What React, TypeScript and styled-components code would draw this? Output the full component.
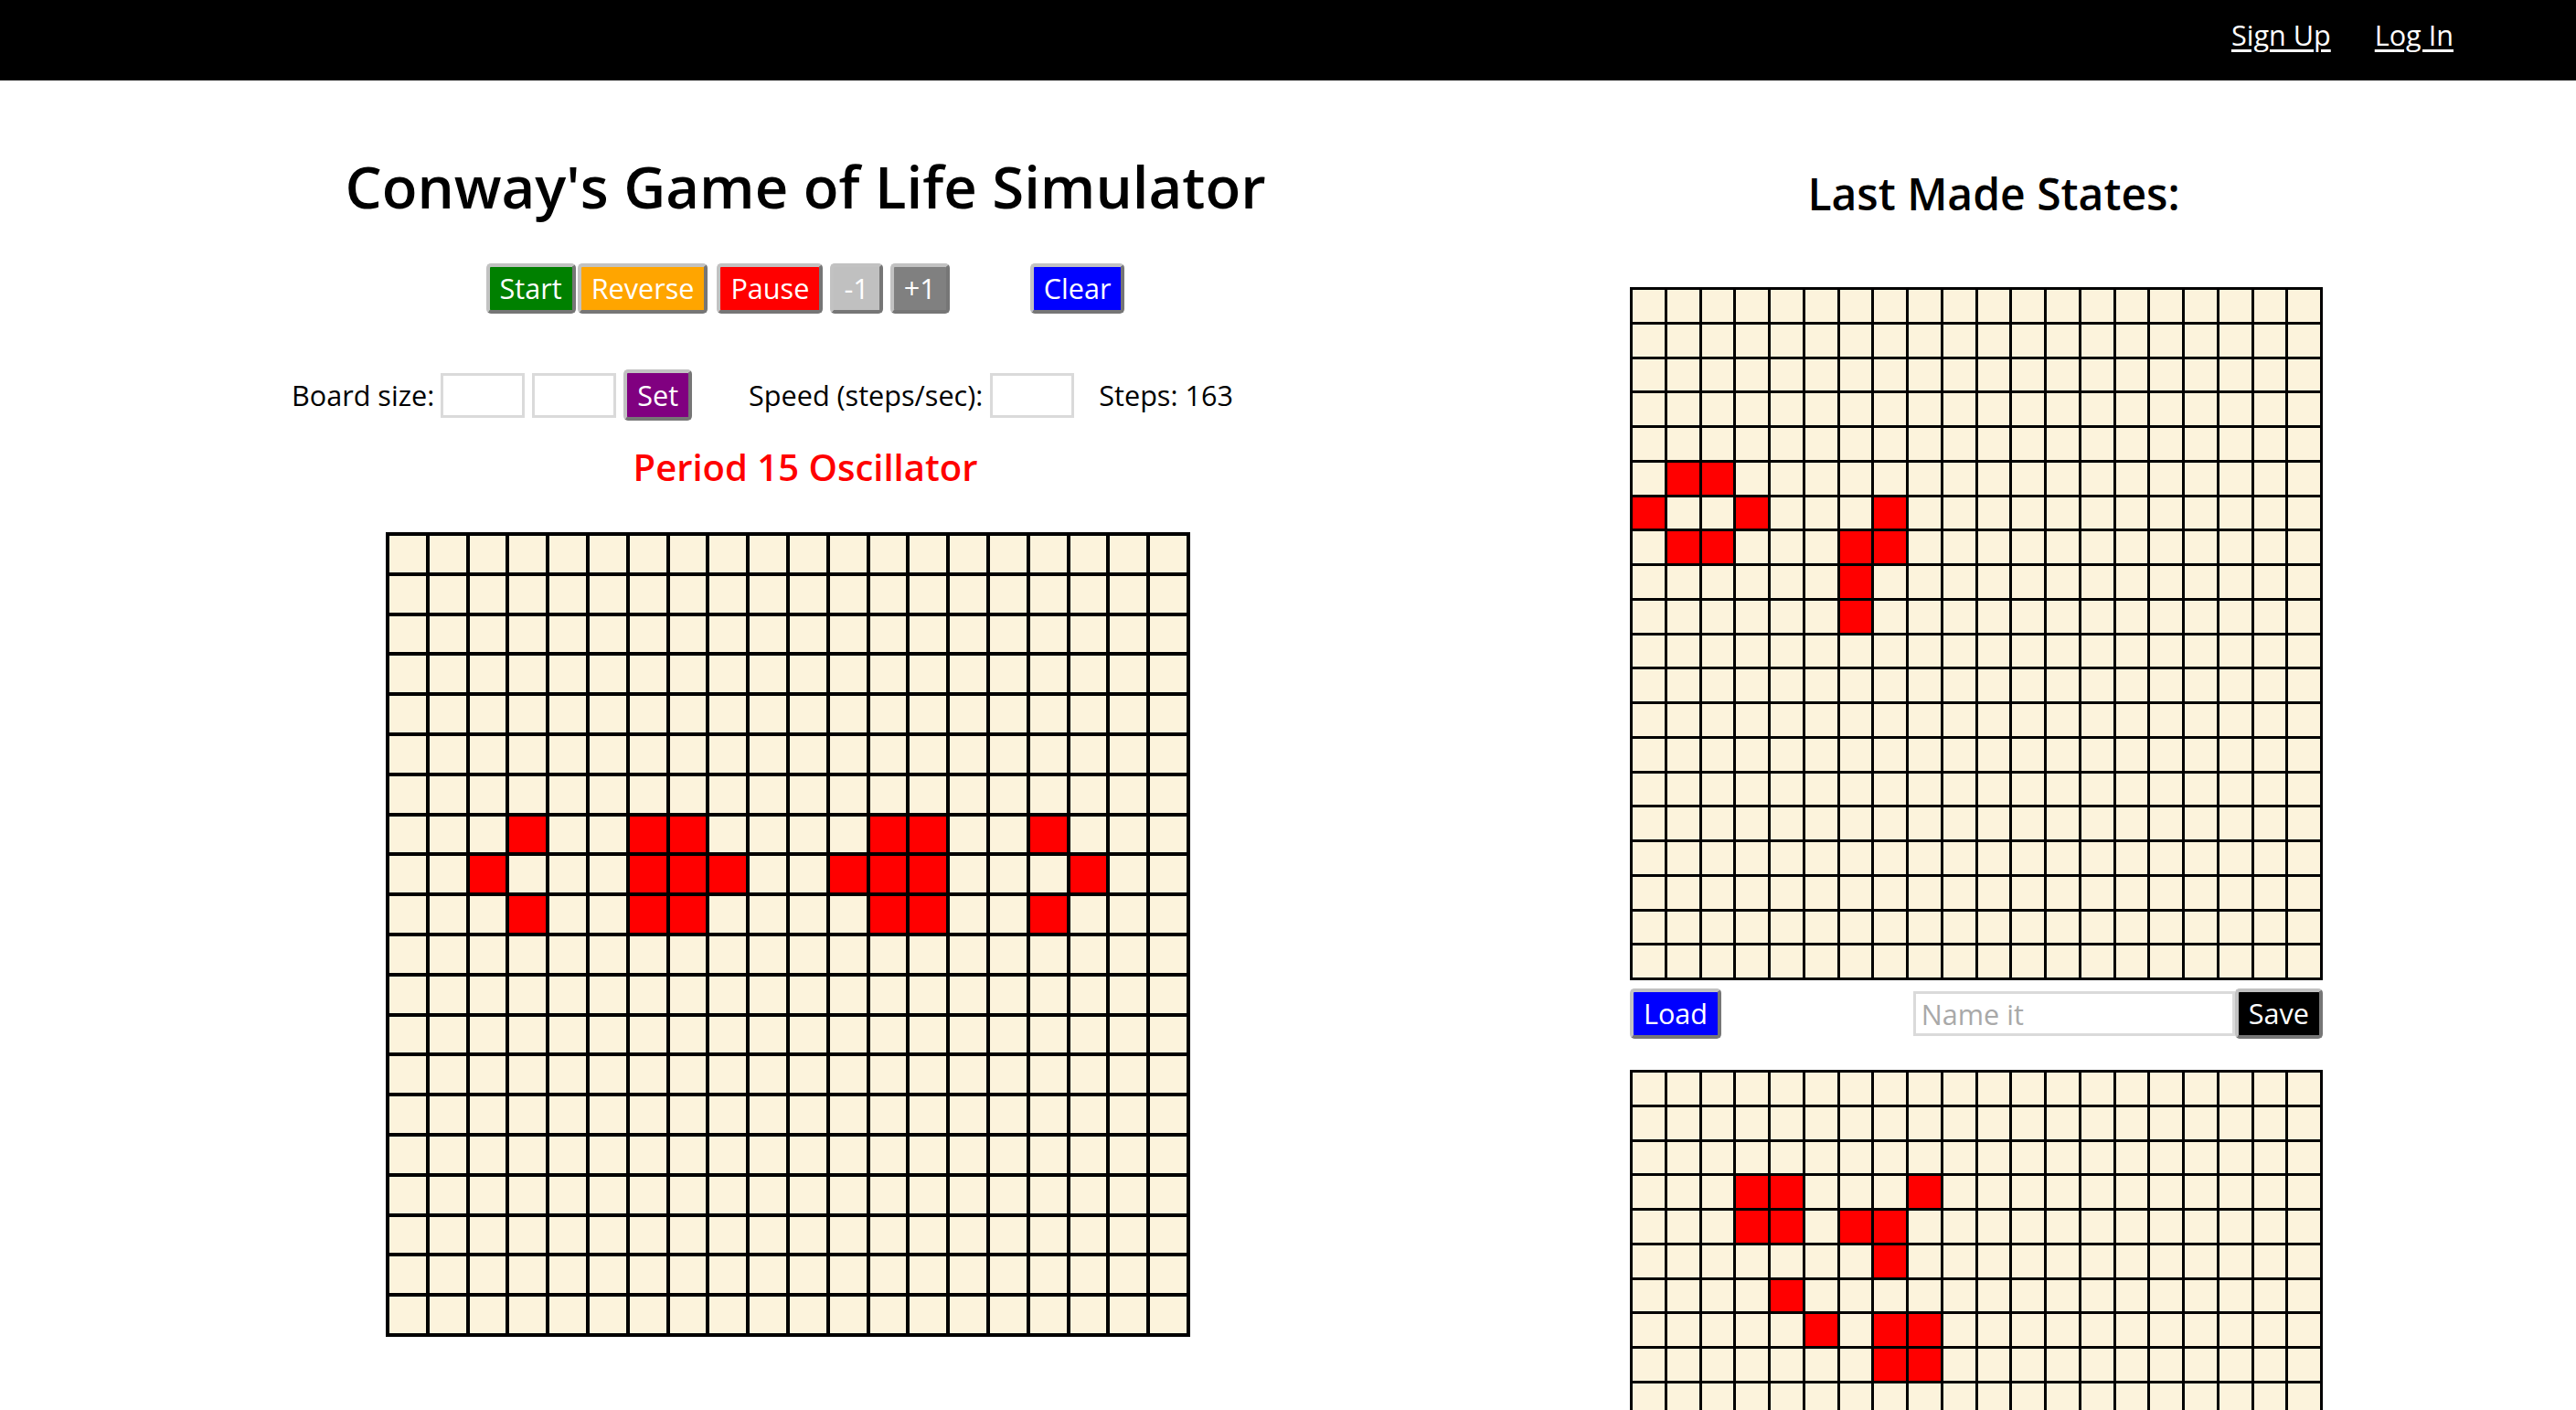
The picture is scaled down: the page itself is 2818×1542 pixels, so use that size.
import React from "react";
import styled, { createGlobalStyle } from "styled-components";

const GlobalStyle = createGlobalStyle`
  html, body { margin: 0; padding: 0; background: #ffffff; }
  body { font-family: "Open Sans", "Noto Sans", sans-serif; color: #000; }
  * { box-sizing: border-box; }
`;

const TopBar = styled.header`
  height: 88px;
  background: #000;
  display: flex;
  justify-content: flex-end;
  align-items: flex-start;
  gap: 48px;
  padding: 17px 134px 0 0;
`;

const NavLink = styled.a`
  color: #fff;
  font-size: 30.6px;
  line-height: 42px;
  text-decoration: underline;
  text-underline-offset: 4px;
  cursor: pointer;
`;

const Page = styled.main`
  display: flex;
  align-items: flex-start;
`;

const LeftColumn = styled.section`
  width: 1762px;
  display: flex;
  flex-direction: column;
  align-items: center;
`;

const RightColumn = styled.section`
  width: 838px;
  display: flex;
  flex-direction: column;
`;

const Title = styled.h1`
  margin: 73px 0 0;
  font-size: 63.5px;
  line-height: 86px;
  font-weight: 600;
  text-align: center;
`;

const ButtonRow = styled.div`
  margin-top: 41px;
  display: flex;
  align-items: center;
`;

const ActionButton = styled.button<{ $bg: string; $ml?: number; $h?: number }>`
  height: ${(p) => p.$h ?? 55}px;
  margin-left: ${(p) => p.$ml ?? 0}px;
  padding: 0 11px;
  font-family: "Open Sans", "Noto Sans", sans-serif;
  font-size: 30.6px;
  line-height: 1;
  color: #fff;
  background: ${(p) => p.$bg};
  border: 4px solid;
  border-color: #c2c2c2 #767676 #767676 #c2c2c2;
  border-radius: 5px;
  cursor: pointer;
`;

const SettingsRow = styled.div`
  align-self: stretch;
  margin-top: 61px;
  padding-left: 319px;
  display: flex;
  align-items: center;
  font-size: 30.6px;
`;

const Label = styled.span<{ $ml?: number }>`
  margin-left: ${(p) => p.$ml ?? 0}px;
  line-height: 42px;
  white-space: nowrap;
`;

const NumberInput = styled.input<{ $ml?: number }>`
  width: 92px;
  height: 49px;
  margin-left: ${(p) => p.$ml ?? 0}px;
  border: 3px solid #dadada;
  background: #fff;
  font-family: "Open Sans", "Noto Sans", sans-serif;
  font-size: 30.6px;
`;

const PatternName = styled.div`
  margin-top: 24px;
  font-size: 40px;
  line-height: 54px;
  font-weight: 600;
  color: #ff0000;
`;

const Board = styled.div<{ $size: number; $line: number; $n: number }>`
  width: ${(p) => p.$size}px;
  height: ${(p) => p.$size}px;
  background: #000;
  padding: ${(p) => p.$line}px;
  gap: ${(p) => p.$line}px;
  display: grid;
  grid-template-columns: repeat(${(p) => p.$n}, 1fr);
  grid-template-rows: repeat(${(p) => p.$n}, 1fr);
`;

const MainBoard = styled(Board)`
  align-self: flex-start;
  margin: 44px 0 0 422px;
`;

const SavedBoard = styled(Board)<{ $mt: number }>`
  margin: ${(p) => p.$mt}px 0 0 21px;
`;

const Cell = styled.div<{ $alive: boolean }>`
  background: ${(p) => (p.$alive ? "#ff0000" : "#fcf3dc")};
`;

const SideTitle = styled.h2`
  margin: 91px 0 0;
  font-size: 48px;
  line-height: 65px;
  font-weight: 600;
  text-align: center;
`;

const SaveRow = styled.div`
  width: 758px;
  margin: 9px 0 0 21px;
  display: flex;
  align-items: center;
  justify-content: space-between;
`;

const SaveGroup = styled.div`
  display: flex;
  align-items: center;
`;

const NameInput = styled.input`
  width: 352px;
  height: 49px;
  border: 3px solid #dadada;
  padding: 0 6px;
  font-family: "Open Sans", "Noto Sans", sans-serif;
  font-size: 30.6px;
  color: #000;
  &::placeholder { color: #a9a9a9; }
`;

type Pattern = Array<[number, number]>;

const mainPattern: Pattern = [
  [7, 3], [7, 6], [7, 7], [7, 12], [7, 13], [7, 16],
  [8, 2], [8, 6], [8, 7], [8, 8], [8, 11], [8, 12], [8, 13], [8, 17],
  [9, 3], [9, 6], [9, 7], [9, 12], [9, 13], [9, 16],
];

const saved1: Pattern = [
  [5, 1], [5, 2],
  [6, 0], [6, 3], [6, 7],
  [7, 1], [7, 2], [7, 6], [7, 7],
  [8, 6],
  [9, 6],
];

const saved2: Pattern = [
  [3, 3], [3, 4], [3, 8],
  [4, 3], [4, 4], [4, 6], [4, 7],
  [5, 7],
  [6, 4],
  [7, 5], [7, 7], [7, 8],
  [8, 7], [8, 8],
];

const N = 20;

function Cells({ pattern }: { pattern: Pattern }) {
  const alive = new Set(pattern.map(([r, c]) => `${r}-${c}`));
  const cells = [];
  for (let r = 0; r < N; r++) {
    for (let c = 0; c < N; c++) {
      cells.push(<Cell key={`${r}-${c}`} $alive={alive.has(`${r}-${c}`)} />);
    }
  }
  return <>{cells}</>;
}

export default function App() {
  return (
    <>
      <GlobalStyle />
      <TopBar>
        <NavLink>Sign Up</NavLink>
        <NavLink>Log In</NavLink>
      </TopBar>
      <Page>
        <LeftColumn>
          <Title>Conway's Game of Life Simulator</Title>
          <ButtonRow>
            <ActionButton $bg="#008000">Start</ActionButton>
            <ActionButton $bg="#ffa500" $ml={2}>Reverse</ActionButton>
            <ActionButton $bg="#ff0000" $ml={10}>Pause</ActionButton>
            <ActionButton $bg="#c0c0c0" $ml={8}>-1</ActionButton>
            <ActionButton $bg="#808080" $ml={8}>+1</ActionButton>
            <ActionButton $bg="#0000ff" $ml={88}>Clear</ActionButton>
          </ButtonRow>
          <SettingsRow>
            <Label>Board size:</Label>
            <NumberInput $ml={7} />
            <NumberInput $ml={8} />
            <ActionButton $bg="#800080" $ml={8} $h={56}>Set</ActionButton>
            <Label $ml={62}>Speed (steps/sec):</Label>
            <NumberInput $ml={8} />
            <Label $ml={27}>Steps: 163</Label>
          </SettingsRow>
          <PatternName>Period 15 Oscillator</PatternName>
          <MainBoard $size={880} $line={4} $n={N}>
            <Cells pattern={mainPattern} />
          </MainBoard>
        </LeftColumn>
        <RightColumn>
          <SideTitle>Last Made States:</SideTitle>
          <SavedBoard $size={758} $line={3} $n={N} $mt={70}>
            <Cells pattern={saved1} />
          </SavedBoard>
          <SaveRow>
            <ActionButton $bg="#0000ff">Load</ActionButton>
            <SaveGroup>
              <NameInput placeholder="Name it" />
              <ActionButton $bg="#000000">Save</ActionButton>
            </SaveGroup>
          </SaveRow>
          <SavedBoard $size={758} $line={3} $n={N} $mt={34}>
            <Cells pattern={saved2} />
          </SavedBoard>
        </RightColumn>
      </Page>
    </>
  );
}
